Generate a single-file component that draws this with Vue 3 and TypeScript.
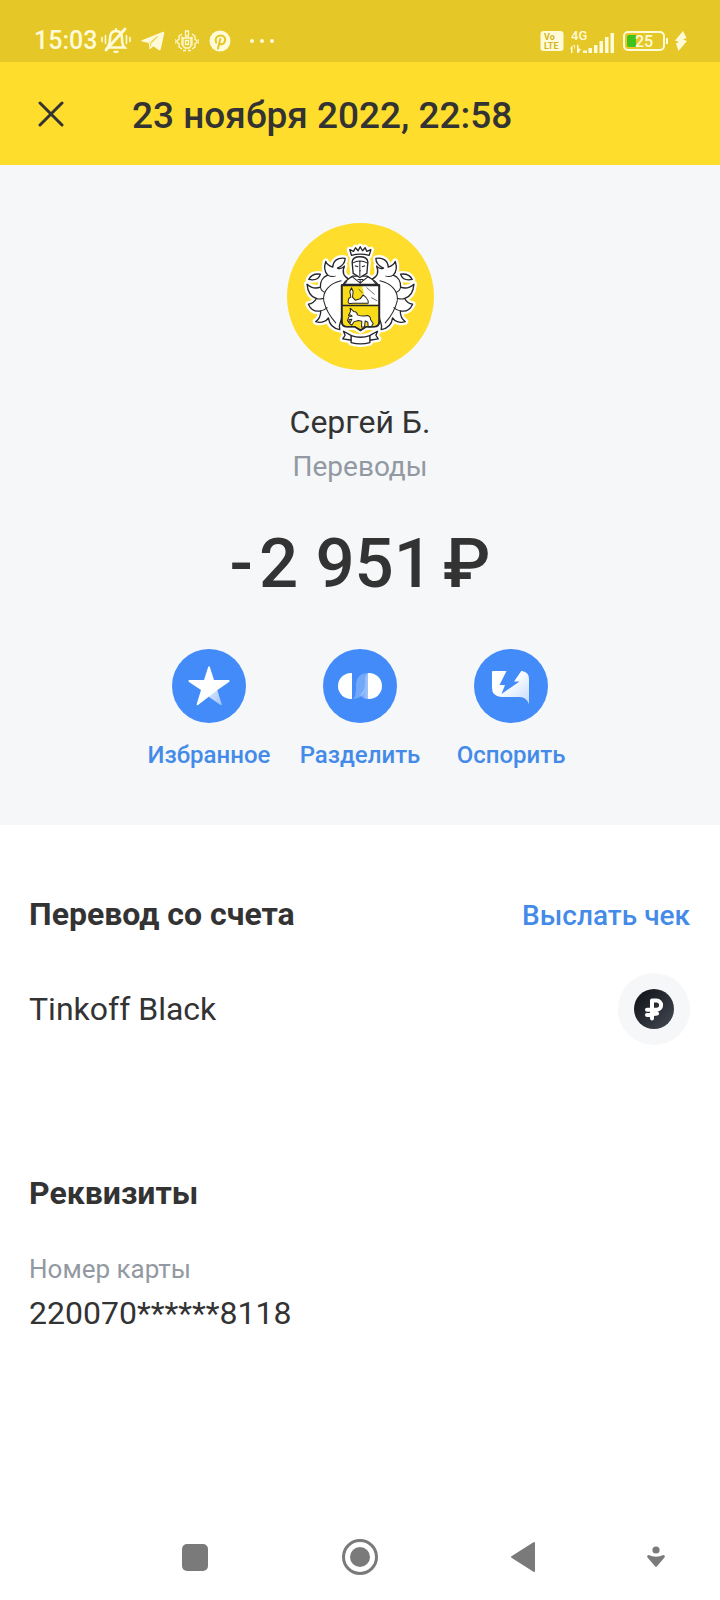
<script setup lang="ts">
type ActionIcon = 'star' | 'split' | 'dispute'

interface Action {
  icon: ActionIcon
  label: string
}

const actions: Action[] = [
  { icon: 'star', label: 'Избранное' },
  { icon: 'split', label: 'Разделить' },
  { icon: 'dispute', label: 'Оспорить' },
]
</script>

<template>
  <div class="screen">
    <div class="status">
      <span class="clock">15:03</span>
      <div class="status-left">
        <svg class="bell" viewBox="0 0 30 28" width="30" height="28" fill="none" stroke="currentColor" stroke-width="2" stroke-linecap="round">
          <path d="M6.500 20.500h17c-2-2-2.500-5-2.500-8.500C21 7 19 4 15 4S9 7 9 12c0 3.500-.5 6-2.500 8.500z" stroke-width="2.500" />
          <path d="M15 2v2" />
          <path d="M12.500 24.500h5l-2.500 1z" stroke-width="1.500" fill="currentColor" />
          <path d="M5 23 24 2" stroke-width="2.800" />
          <path d="M1 10.500v4M4.500 8.500v8M25.500 8.500v8M29 10.500v4" stroke-width="1.600" />
        </svg>
        <svg viewBox="0 0 24 20" width="24" height="20" fill="currentColor">
          <path d="M.8 9.300 21.500.9c1.200-.4 2 .1 1.700 1.500l-3.400 15.700c-.3 1.300-1.200 1.500-2.200 1l-5.300-3.900-2.700 2.600c-.6.6-1 .7-1.200-.6l-.7-5.200L1 10.600c-.8-.3-.9-.9-.2-1.300z" />
          <path d="m8.500 12 8-6.500-6.500 7-.7 3" stroke="#e5c727" stroke-width=".8" fill="none" />
        </svg>
        <svg viewBox="0 0 24 22" width="24" height="22" fill="none" stroke="currentColor" stroke-width="1.300">
          <path d="M10.500 1h3v5h-3zM8 8h8v8l-2 2h-4l-2-2z" />
          <path d="M10.500 10.500h3v4h-3z" />
          <path d="M7 4 4 6v3.500L2 10.500v2l2 1V17l3 2M17 4l3 2v3.500l2 1v2l-2 1V17l-3 2M7 6.500v9M17 6.500v9M8 20.500h3M13 20.500h3M0 9v5M24 9v5" />
        </svg>
        <svg viewBox="0 0 22 22" width="22" height="22">
          <circle cx="11" cy="11" r="10.500" fill="currentColor" />
          <path d="M9 18.500 11.300 9M7.200 12.500C5.500 9 7.500 5.500 11.500 5.500c3.500 0 5.300 2.500 4.500 5.500-.8 3.300-4.500 4.500-5.500 2" fill="none" stroke="#e5c727" stroke-width="2" stroke-linecap="round" />
        </svg>
        <svg class="dots" viewBox="0 0 24 6" width="24" height="6" fill="currentColor">
          <circle cx="2" cy="3" r="2" /><circle cx="12" cy="3" r="2" /><circle cx="22" cy="3" r="2" />
        </svg>
      </div>
      <div class="status-right">
        <svg viewBox="0 0 24 20" width="24" height="20">
          <rect x=".5" width="23" height="20" rx="3" fill="currentColor" />
          <text x="4" y="9" class="volte">Vo</text>
          <text x="4" y="18" class="volte">LTE</text>
        </svg>
        <svg viewBox="0 0 44 26" width="44" height="26" fill="currentColor">
          <text x="1" y="12" class="net">4G</text>
          <path d="M0 20.500 2.500 17v8H1v-4zM3.500 17H5v5zM7 17h1.500v3.500L11 21l-2.500 4H7z" />
          <path d="M13 22.500h4V25h-4zM18.500 20h3.500v5h-3.500zM24 17h3.500v8H24zM29.500 13h3.500v12h-3.500zM35 9h3.500v16H35zM40.500 5H44v20h-3.500z" />
        </svg>
        <svg class="battery" viewBox="0 0 46 20" width="46" height="20">
          <rect x="1" y="1" width="40" height="18" rx="4" fill="none" stroke="currentColor" stroke-width="2" />
          <path d="M6 4h7v12H6a2 2 0 0 1-2-2V6a2 2 0 0 1 2-2z" fill="#3fc31b" />
          <text x="12" y="15.500" class="charge">25</text>
          <path d="M43 7h2v6h-2z" fill="currentColor" />
        </svg>
        <svg class="bolt" viewBox="0 0 12 20" width="12" height="20" fill="currentColor">
          <path d="M8 0 0 9.500 4 11l-3 1.500L3.500 20 12 10 8 8.500 11.500 7z" />
        </svg>
      </div>
    </div>

    <header class="header">
      <button class="close" type="button" aria-label="Закрыть">
        <svg viewBox="0 0 26 26" width="26" height="26" fill="none" stroke="currentColor" stroke-width="3" stroke-linecap="round">
          <path d="m2 2 22 22M24 2 2 24" />
        </svg>
      </button>
      <h1>23 ноября 2022, 22:58</h1>
    </header>

    <section class="summary">
      <svg class="avatar" viewBox="20 25 440 440" width="147" height="147" aria-hidden="true">
        <defs>
          <g id="mantle">
            <path d="M206 194C190 186 184 172 192 154C186 160 178 163 171 160C184 154 194 146 194 131C172 127 158 138 157 157C148 154 140 150 136 140C130 158 133 172 142 181C128 186 119 200 120 217C106 222 92 219 80 208C82 234 94 247 108 251C102 262 94 267 84 268C92 286 106 291 121 288C121 302 116 314 106 320C124 326 138 319 144 309C146 326 156 340 178 344C172 328 184 322 184 304V210H200Z" />
            <path d="M85 194C92 180 104 176 120 178C116 192 106 198 85 194Z" />
          </g>
          <g id="veins">
            <path d="M182 198C146 206 126 230 130 258C136 284 150 306 166 324" />
            <path d="M142 181C150 186 158 186 164 184M120 217C122 226 126 230 132 232M108 251C116 254 124 252 130 250M121 288C130 286 136 282 140 278" />
          </g>
          <g id="emblem">
            <path d="M183 210H297V320Q297 336 281 336H257L240 347L223 336H199Q183 336 183 320Z" />
            <path d="M213 362L189 349L194 361L187 372L213 376ZM267 362L291 349L286 361L293 372L267 376Z" />
            <path d="M212 362Q240 372 268 362V383Q240 391 212 383Z" />
            <path d="M188 209C194 196 206 192 216 184H260C270 192 284 196 292 209Z" />
            <path d="M215 142Q216 126 238 126Q261 126 262 142L259 176L238 188L218 176Z" />
            <path d="M213 122L208 105L219 110L225 99L233 108L239 96L246 108L254 99L259 110L271 105L266 122Q239 114 213 122Z" />
          </g>
        </defs>
        <circle cx="240" cy="245" r="220" fill="#ffdd2d" />
        <g fill="#fff" stroke="#fff" stroke-width="18" stroke-linejoin="round">
          <use href="#mantle" /><use href="#mantle" transform="matrix(-1 0 0 1 480 0)" />
          <use href="#emblem" />
        </g>
        <g fill="#fff" stroke="#25252b" stroke-width="4" stroke-linejoin="round">
          <use href="#mantle" /><use href="#mantle" transform="matrix(-1 0 0 1 480 0)" />
          <g fill="none" stroke-width="3" stroke-linecap="round">
            <use href="#veins" /><use href="#veins" transform="matrix(-1 0 0 1 480 0)" />
          </g>
          <use href="#emblem" />
        </g>
        <path d="M186 213H294V319Q294 333 280 333H256L240 343L224 333H200Q186 333 186 319Z" fill="#f8dc18" />
        <path d="M244 213H294V270H262L262 258L244 246L250 232Z" fill="#fff" />
        <g fill="#fff" stroke="#25252b" stroke-width="3" stroke-linejoin="round" stroke-linecap="round">
          <path d="M203 262Q203 248 211 247L208 230L213 219L218 230L216 247L224 256L239 252L248 240Q258 247 263 258V265H216Q204 268 203 262Z" />
          <path d="M209 280L220 290Q229 290 231 300Q246 306 258 302Q270 302 270 314L278 326L272 336H263L262 322L254 318L252 336H243L244 319L233 317L220 321L214 331L208 327L214 313L206 314V324L201 317L205 306L215 304L210 300L204 302L210 290Z" />
        </g>
        <path d="M184 272H296M185 212H295V320Q295 335 281 335H257L240 345L223 335H199Q185 335 185 320Z" stroke="#25252b" stroke-width="4" fill="none" />
        <path d="M216 145Q238 132 261 145M238 140V184M223 153L233 156M244 156L254 153M236 168H241M216 186L239 205L262 186M231 194H247V199M239 194V210M200 200L190 209M278 197L287 209" fill="none" stroke="#25252b" stroke-width="3" />
        <path d="M234 222L246 235M258 218L282 239M272 248L290 258" fill="none" stroke="#25252b" stroke-width="2" />
      </svg>
      <h2 class="name">Сергей Б.</h2>
      <p class="category">Переводы</p>
      <p class="amount"><span>-</span><span>2 951</span><span class="currency">₽</span></p>

      <div class="actions">
        <button v-for="action in actions" :key="action.icon" type="button" class="action">
          <svg viewBox="0 0 74 74" width="74" height="74" aria-hidden="true">
            <defs>
              <linearGradient id="fold" x1="0" y1="0" x2="1" y2="1">
                <stop offset="0" stop-color="#fff" stop-opacity=".8" />
                <stop offset="1" stop-color="#fff" stop-opacity=".5" />
              </linearGradient>
              <linearGradient id="bubble" x1="0" y1="0" x2="1" y2="1">
                <stop offset=".4" stop-color="#fff" />
                <stop offset="1" stop-color="#c3dafd" />
              </linearGradient>
              <linearGradient id="half" x1="0" y1="0" x2="1" y2="0">
                <stop offset="0" stop-color="#fff" stop-opacity=".2" />
                <stop offset="1" stop-color="#fff" stop-opacity=".5" />
              </linearGradient>
            </defs>
            <circle cx="37" cy="37" r="37" fill="#428bf9" />
            <template v-if="action.icon === 'star'">
              <path d="m37 42 8-2 4.600 15q.4 1.500-1 1L37 48z" fill="url(#fold)" />
              <path d="M36 18.500q1-2.500 2 0L42 31h14.500q2 .5.500 2L45.500 41 26 56q-1.500 1-1.300-1L29 41 17 33q-1.500-1.500.5-2H32z" fill="#fff" />
            </template>
            <template v-else-if="action.icon === 'split'">
              <path d="M29 24h-1a13 13 0 0 0 0 26h1z" fill="#fff" />
              <path d="M45 24h1a13 13 0 0 1 0 26h-1z" fill="#fff" />
              <path d="M29 50c9 0 13-5 13-13 0-7 1-13 3-13-9 0-12 6-12 13 0 8-1 13-4 13z" fill="#fff" opacity=".25" />
              <path d="M45 24v26c-4 0-6-2-8-4 4-4 5-7 5-12 0-4 0-8 3-10z" fill="url(#half)" />
            </template>
            <template v-else>
              <path d="M19 22h29q7 1 7 8v25q-3-7-9-7H27q-9-1-9-9V23q0-1 1-1z" fill="url(#bubble)" />
              <path d="M33 21 25.500 36H31l-3.500 9 18-12.500H40L48 21z" fill="#428bf9" />
            </template>
          </svg>
          <span>{{ action.label }}</span>
        </button>
      </div>
    </section>

    <main class="details">
      <div class="row">
        <h3>Перевод со счета</h3>
        <a class="receipt" href="#receipt">Выслать чек</a>
      </div>
      <div class="row account">
        <span class="value">Tinkoff Black</span>
        <svg viewBox="0 0 72 72" width="72" height="72" aria-hidden="true">
          <defs>
            <linearGradient id="coin" x1="0" y1="0" x2="1" y2="1">
              <stop offset="0" stop-color="#0d0f13" />
              <stop offset="1" stop-color="#454a55" />
            </linearGradient>
          </defs>
          <circle cx="36" cy="36" r="36" fill="#f6f7f9" />
          <circle cx="36" cy="36" r="20" fill="url(#coin)" />
          <path d="M34 27.500h4.500a4.600 4.600 0 0 1 0 9.200H29M34 27.500v18M29 42l10-1.500" fill="none" stroke="#fff" stroke-width="4" stroke-linecap="round" stroke-linejoin="round" />
        </svg>
      </div>
      <h3 class="requisites">Реквизиты</h3>
      <dl>
        <dt>Номер карты</dt>
        <dd>220070******8118</dd>
      </dl>
    </main>

    <nav class="navbar">
      <button type="button" aria-label="Недавние">
        <svg viewBox="0 0 26 27" width="26" height="27" fill="currentColor"><rect width="26" height="27" rx="5" /></svg>
      </button>
      <button type="button" aria-label="Домой">
        <svg viewBox="0 0 38 38" width="38" height="38" fill="none">
          <circle cx="19" cy="19" r="16.500" stroke="currentColor" stroke-width="3" /><circle cx="19" cy="19" r="10" fill="currentColor" />
        </svg>
      </button>
      <button type="button" aria-label="Назад">
        <svg viewBox="0 0 26 32" width="26" height="32" fill="currentColor" stroke="currentColor" stroke-width="2" stroke-linejoin="round"><path d="M24 2v28L2 16z" /></svg>
      </button>
      <button type="button" aria-label="Скрыть">
        <svg viewBox="0 0 18 22" width="18" height="22" fill="currentColor">
          <circle cx="9" cy="4" r="3.600" />
          <path d="M1.500 9Q9 12.500 16.500 9q2 .5 1 2.500L10 20.200q-1 1-2 0L.5 11.500q-1-2 1-2.500z" />
        </svg>
      </button>
    </nav>
  </div>
</template>

<style>
body {
  margin: 0;
  background: #fff;
}
</style>

<style scoped>
.screen {
  min-height: 100vh;
  display: flex;
  flex-direction: column;
  font-family: Roboto, "Noto Sans", sans-serif;
  color: #333;
}
h1, h2, h3, p, dl, dd {
  margin: 0;
}
svg {
  display: block;
  flex: none;
}
button {
  border: 0;
  padding: 0;
  background: none;
  font: inherit;
  color: inherit;
}
.status {
  height: 62px;
  box-sizing: border-box;
  padding: 20px 33px 0 34px;
  display: flex;
  align-items: center;
  background: #e5c727;
  color: #fffbd8;
}
.clock {
  font-size: 25px;
  line-height: 30px;
  font-weight: 500;
}
.status-left {
  display: flex;
  align-items: center;
  gap: 10px;
  margin-left: 4px;
}
.dots {
  margin-left: 9px;
}
.status-right {
  display: flex;
  align-items: center;
  gap: 6px;
  margin-left: auto;
}
.battery {
  margin-left: 3px;
}
.volte {
  font-size: 9px;
  font-weight: 700;
  fill: #d3b520;
}
.net {
  font-size: 13px;
  font-weight: 500;
}
.charge {
  font-size: 16px;
  font-weight: 500;
  fill: #fffbd8;
}
.header {
  height: 103px;
  box-sizing: border-box;
  display: flex;
  align-items: center;
  gap: 68px;
  padding: 0 38px;
  background: #ffdd2d;
}
h1 {
  padding-top: 4px;
  font-size: 37px;
  line-height: 44px;
  font-weight: 500;
}
.summary {
  display: flex;
  flex-direction: column;
  align-items: center;
  padding: 58px 24px 55px;
  background: #f5f7f9;
}
.name {
  margin-top: 32px;
  font-size: 32px;
  line-height: 40px;
  font-weight: 400;
}
.category {
  margin-top: 8px;
  font-size: 28px;
  line-height: 34px;
  color: #9299a2;
}
.amount {
  margin-top: 38px;
  display: flex;
  gap: 6px;
  font-size: 69px;
  line-height: 84px;
  font-weight: 500;
}
.currency {
  margin-left: 4px;
}
.actions {
  margin-top: 43px;
  width: 453px;
  display: grid;
  grid-template-columns: repeat(3, 1fr);
}
.action {
  display: flex;
  flex-direction: column;
  align-items: center;
  gap: 17px;
  font-size: 24px;
  line-height: 30px;
  font-weight: 500;
  color: #448ae8;
}
.details {
  padding: 71px 30px 40px 29px;
}
.row {
  display: flex;
  justify-content: space-between;
  align-items: center;
}
.row:first-child {
  align-items: flex-start;
}
h3 {
  font-size: 32px;
  line-height: 36px;
  font-weight: 700;
}
.receipt {
  font-size: 28px;
  line-height: 40px;
  font-weight: 500;
  color: #448ae8;
  text-decoration: none;
}
.account {
  margin-top: 37px;
}
.value,
dd {
  font-size: 32px;
  line-height: 40px;
}
.requisites {
  margin-top: 130px;
}
dl {
  margin-top: 42px;
}
dt {
  font-size: 26px;
  line-height: 32px;
  color: #9299a2;
}
dd {
  margin-top: 8px;
}
.navbar {
  margin-top: auto;
  height: 86px;
  display: grid;
  grid-template-columns: 165px 165px 161px 1fr;
  padding: 0 12px 0 112px;
  color: #7a7a7a;
}
.navbar button {
  display: flex;
  align-items: center;
  justify-content: center;
}
</style>
